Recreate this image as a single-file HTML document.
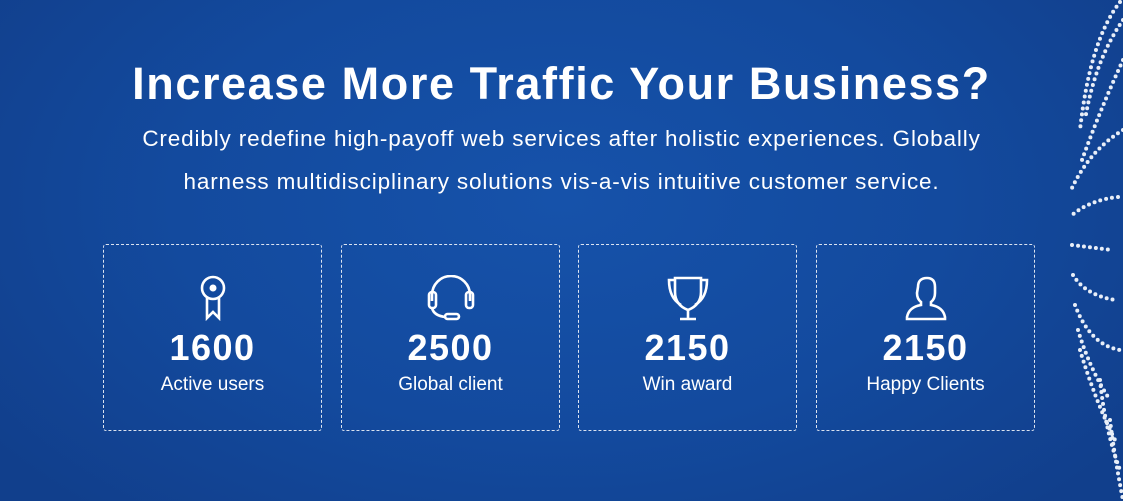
<!DOCTYPE html>
<html><head><meta charset="utf-8"><style>
*{margin:0;padding:0;box-sizing:border-box}
body{width:1123px;height:501px;overflow:hidden;font-family:"Liberation Sans",sans-serif;color:#fff;
background:radial-gradient(ellipse 700px 420px at 560px 200px,#1652aa 0%,#134a9e 55%,#113f8c 100%);position:relative}
h1{position:absolute;top:58px;left:0;width:1123px;text-align:center;font-size:45px;font-weight:bold;letter-spacing:1.6px}
p.sub{position:absolute;top:117px;left:0;width:1123px;text-align:center;font-size:22.5px;line-height:43px;letter-spacing:0.85px}
.box{position:absolute;top:244px;width:219px;height:187px;border:1px dashed rgba(255,255,255,.85);border-radius:3px;text-align:center}
.box svg{position:absolute;left:50%;transform:translateX(-50%);top:30px}
.num{position:absolute;top:82px;width:100%;font-size:36px;font-weight:bold;letter-spacing:1.5px}
.lab{position:absolute;top:129px;width:100%;font-size:19px}
</style></head><body>
<h1>Increase More Traffic Your Business?</h1>
<p class="sub">Credibly redefine high-payoff web services after holistic experiences. Globally<br>harness multidisciplinary solutions vis-a-vis intuitive customer service.</p>

<div class="box" style="left:103px"><svg width="44" height="46" viewBox="0 0 44 46" fill="none" stroke="#fff" stroke-width="2.6"><circle cx="22" cy="13" r="11"/><circle cx="22" cy="13" r="3.5" fill="#fff" stroke="none"/><path d="M16 23v20l6-6 6 6V23"/></svg><div class="num">1600</div><div class="lab">Active users</div></div>
<div class="box" style="left:341px"><svg width="50" height="46" viewBox="0 0 50 46" fill="none" stroke="#fff" stroke-width="2.6"><path d="M6 26V20a19 19 0 0 1 38 0v6"/><rect x="3" y="17" width="7" height="16" rx="3"/><rect x="40" y="17" width="7" height="16" rx="3"/><path d="M6 33q2 8 14 9"/><rect x="19" y="39" width="14" height="5" rx="2.5"/></svg><div class="num">2500</div><div class="lab">Global client</div></div>
<div class="box" style="left:578px"><svg width="50" height="46" viewBox="0 0 50 46" fill="none" stroke="#fff" stroke-width="2.6"><path d="M12 3h26v14q0 13-13 18Q12 30 12 17z"/><path d="M12 5H6q0 18 12 25"/><path d="M38 5h6q0 18-12 25"/><path d="M25 35v8M17 44h16"/></svg><div class="num">2150</div><div class="lab">Win award</div></div>
<div class="box" style="left:816px"><svg width="50" height="46" viewBox="0 0 50 46" fill="none" stroke="#fff" stroke-width="2.6"><path d="M17 12q0-9 9-9 8 0 8 9v6q0 6-4 9v3q12 2 14 12v2H6v-2q2-10 14-12v-3q-4-3-4-9z"/></svg><div class="num">2150</div><div class="lab">Happy Clients</div></div>

<svg style="position:absolute;left:1040px;top:0" width="83" height="501" fill="none" stroke="#e8eef8" stroke-width="4" stroke-linecap="round" stroke-dasharray="0 6">
<path d="M80 2Q50 40 40 130"/>
<path d="M83 20Q55 60 45 120"/>
<path d="M83 60Q60 110 42 160"/>
<path d="M83 130Q50 150 32 188"/>
<path d="M78 197Q50 200 32 215"/>
<path d="M32 245Q55 248 72 250"/>
<path d="M33 275Q45 295 75 300"/>
<path d="M35 305Q50 345 80 350"/>
<path d="M38 330Q50 370 70 400"/>
<path d="M40 350Q55 400 75 440"/>
<path d="M60 380Q65 430 80 470"/>
<path d="M70 420Q75 460 83 500"/>
</svg>
</body></html>
